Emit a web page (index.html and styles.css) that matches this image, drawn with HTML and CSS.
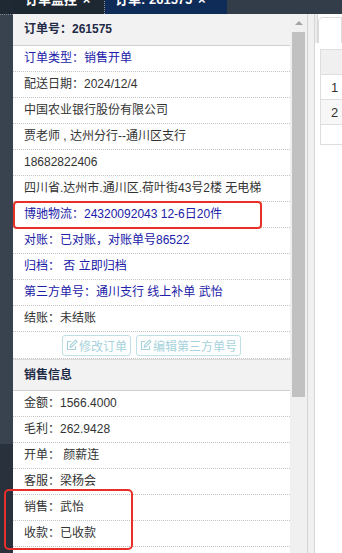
FILE: index.html
```html
<!DOCTYPE html>
<html lang="zh-CN">
<head>
    <meta charset="UTF-8">
    <meta name="viewport" content="width=device-width, initial-scale=1.0">
    <title>订单: 261575</title>
    <link rel="stylesheet" href="styles.css">
</head>
<body>
    <!-- Tab bar (cut off at the top) -->
    <div class="topbar">
        <div class="topbar-side"></div>
        <div class="tab">订单监控 <span class="close">×</span></div>
        <div class="tab tab-active">订单: 261575 <span class="close">×</span></div>
    </div>

    <div class="main">
        <div class="sidebar">
            <div class="sidebar-item"></div>
            <div class="sidebar-rest"></div>
        </div>

        <!-- Order detail panel -->
        <div class="panel">
            <div class="panel-body">
                <div class="head">订单号：261575</div>
                <div class="row blue">订单类型：销售开单</div>
                <div class="row">配送日期：2024/12/4</div>
                <div class="row">中国农业银行股份有限公司</div>
                <div class="row">贾老师 , 达州分行--通川区支行</div>
                <div class="row">18682822406</div>
                <div class="row">四川省.达州市.通川区.荷叶街43号2楼 无电梯</div>
                <div class="row blue">博驰物流：24320092043 12-6日20件</div>
                <div class="row blue">对账：已对账，对账单号86522</div>
                <div class="row blue">归档： 否 立即归档</div>
                <div class="row blue">第三方单号：通川支行 线上补单 武怡</div>
                <div class="row">结账：未结账</div>
                <div class="row row-buttons">
                    <button class="btn" disabled>
                        <svg class="btn-icon" viewBox="0 0 12 12" width="12" height="12">
                            <path d="M9.5 7v3.5H1.5v-8H5" fill="none" stroke="currentColor" stroke-width="1.1"/>
                            <path d="M9.6 1.2l1.4 1.4-5 5-1.9.5.5-1.9z" fill="none" stroke="currentColor" stroke-width="1.1" stroke-linejoin="round"/>
                        </svg>修改订单
                    </button>
                    <button class="btn" disabled>
                        <svg class="btn-icon" viewBox="0 0 12 12" width="12" height="12">
                            <path d="M9.5 7v3.5H1.5v-8H5" fill="none" stroke="currentColor" stroke-width="1.1"/>
                            <path d="M9.6 1.2l1.4 1.4-5 5-1.9.5.5-1.9z" fill="none" stroke="currentColor" stroke-width="1.1" stroke-linejoin="round"/>
                        </svg>编辑第三方单号
                    </button>
                </div>

                <div class="head head-section">销售信息</div>
                <div class="row">金额：1566.4000</div>
                <div class="row">毛利：262.9428</div>
                <div class="row">开单： 颜薪连</div>
                <div class="row">客服：梁杨会</div>
                <div class="row">销售：武怡</div>
                <div class="row">收款：已收款</div>
            </div>

            <!-- Scrollbar of the panel -->
            <div class="scrollbar">
                <div class="scroll-arrow"></div>
                <div class="scroll-thumb"></div>
            </div>
        </div>

        <div class="gutter"></div>

        <!-- Right pane, mostly hidden -->
        <div class="side-pane">
            <div class="side-tabs">
                <div class="side-tab-edge"></div>
                <div class="side-tab"></div>
            </div>
            <table class="side-table">
                <thead>
                    <tr><th></th></tr>
                </thead>
                <tbody>
                    <tr><td>1</td></tr>
                    <tr class="alt"><td>2</td></tr>
                    <tr class="empty"><td></td></tr>
                </tbody>
            </table>
        </div>
    </div>

    <!-- Red annotation marks drawn over the page -->
    <div class="mark mark-logistics"></div>
    <div class="mark mark-sales"></div>
</body>
</html>
```

FILE: styles.css
```css
body {
    margin: 0;
    width: 342px;
    height: 553px;
    overflow: hidden;
    position: relative;
    background-color: #2b3540;
    font-family: "Liberation Sans", "Noto Sans CJK SC", sans-serif;
    font-size: 12px;
    color: #333;
}

.topbar {
    display: flex;
    height: 14px;
    overflow: hidden;
    background-color: #323d49;
}

.topbar-side {
    width: 13px;
    background-color: #1f2933;
}

.tab {
    width: 79px;
    padding-left: 12px;
    margin-top: -9px;
    line-height: 18px;
    color: #fff;
    font-size: 13px;
    font-weight: bold;
    background-color: #1e2832;
    border-right: 1px dotted #8a96a6;
}

.tab-active {
    width: 112px;
    padding-left: 10px;
    background-color: #0f2b57;
    border-right: none;
}

.close {
    margin-left: 2px;
}

.main {
    display: flex;
    height: 539px;
}

.sidebar {
    width: 13px;
    display: flex;
    flex-direction: column;
}

.sidebar-item {
    height: 429px;
    background-color: #39434f;
    border-top: 1px dotted #7d8794;
}

.sidebar-rest {
    flex: 1;
    background-color: #29323c;
}

.panel {
    display: flex;
    width: 294px;
    background-color: #fff;
}

.panel-body {
    width: 277px;
    overflow: hidden;
}

.head {
    height: 31px;
    line-height: 31px;
    padding-left: 11px;
    font-weight: bold;
    color: #1f2b47;
    background-color: #f2f2f2;
    border-bottom: 1px solid #cfcfcf;
}

.head-section {
    height: 30px;
    line-height: 30px;
    border-top: 1px solid #dadada;
}

.row {
    height: 25px;
    line-height: 25px;
    padding-left: 11px;
    white-space: nowrap;
    border-bottom: 1px dotted #c4c4c4;
}

.blue {
    color: #2020a8;
}

.row-buttons {
    display: flex;
    justify-content: center;
    align-items: center;
    gap: 5px;
    padding-left: 0;
    height: 26px;
}

.btn {
    display: flex;
    align-items: center;
    gap: 1px;
    height: 21px;
    padding: 0 3px;
    font-family: inherit;
    font-size: 12px;
    color: #a6d2dc;
    background-color: #fff;
    border: 1px solid #bfe0e6;
    border-radius: 3px;
}

.btn-icon {
    flex: none;
}

.scrollbar {
    width: 17px;
    background-color: #f0f0f0;
}

.scroll-arrow {
    width: 0;
    height: 0;
    margin: 7px auto 0;
    border-left: 4px solid transparent;
    border-right: 4px solid transparent;
    border-bottom: 4px solid #a3a3a3;
}

.scroll-thumb {
    width: 13px;
    height: 365px;
    margin: 7px 0 0 2px;
    background-color: #c1c1c1;
}

.gutter {
    width: 6px;
    background-color: #f0f0f0;
    border-left: 1px solid #d2d2d2;
}

.side-pane {
    flex: 1;
    background-color: #fff;
    border-left: 1px solid #d6d6d6;
    overflow: hidden;
}

.side-tabs {
    display: flex;
    height: 29px;
}

.side-tab-edge {
    width: 4px;
    background-color: #ececec;
    border-right: 1px solid #d6d6d6;
}

.side-tab {
    width: 40px;
    margin-top: 3px;
    border: 1px solid #dcdcdc;
    border-bottom: none;
    border-radius: 5px 0 0 0;
}

.side-table {
    margin: 6px 0 0 5px;
    border-collapse: collapse;
    width: 60px;
}

.side-table th,
.side-table td {
    height: 24px;
    padding: 0 0 0 10px;
    text-align: left;
    font-size: 13px;
    font-weight: normal;
    border: 1px solid #dedede;
}

.side-table th {
    background-color: #f0f0f0;
}

.side-table .alt td {
    background-color: #f7f7f7;
}

.side-table .empty td {
    height: 19px;
}

.mark {
    position: absolute;
    border: 2px solid #e8302a;
}

.mark-logistics {
    left: 13px;
    top: 201px;
    width: 245px;
    height: 24px;
    border-radius: 4px;
}

.mark-sales {
    left: 4px;
    top: 489px;
    width: 125px;
    height: 57px;
    border-radius: 5px;
}
```
